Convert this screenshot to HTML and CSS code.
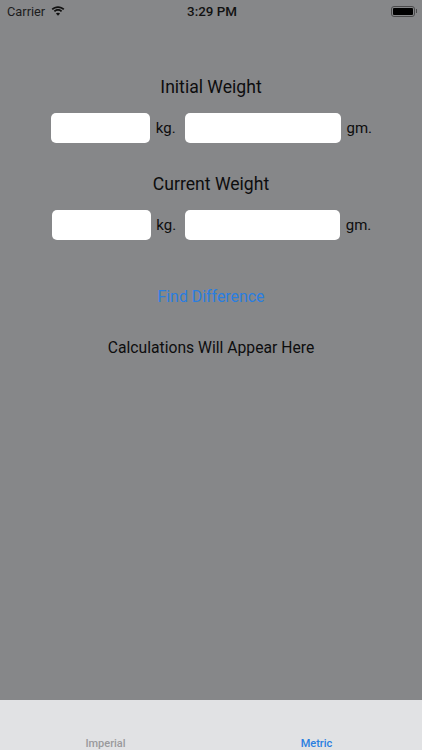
FILE: index.html
```html
<!DOCTYPE html>
<html lang="en">
<head>
	<meta charset="UTF-8">
	<title>Weight Difference</title>
	<link rel="stylesheet" href="styles.css">
</head>
<body>
	<div class="screen">
		<div class="status-bar">
			<div class="status-left">
				<span>Carrier</span>
				<svg class="wifi" width="14" height="10" viewBox="0 0 15 11">
					<path d="M7.5 2.2c2.2 0 4.200.8 5.700 2.200l1.300-1.400C12.600 1.200 10.200.2 7.500.2S2.400 1.200.500 3l1.300 1.400c1.500-1.400 3.500-2.200 5.700-2.200z"/>
					<path d="M7.500 5.300c1.300 0 2.400.5 3.300 1.300l1.300-1.400C10.900 4 9.300 3.300 7.500 3.300S4.100 4 2.900 5.200l1.300 1.400c.9-.8 2-1.300 3.300-1.300z"/>
					<path d="M7.500 10.800l2.300-2.500c-.6-.6-1.400-.9-2.300-.9s-1.700.3-2.300.9z"/>
				</svg>
			</div>
			<div class="status-time">3:29 PM</div>
			<div class="battery">
				<div class="battery-body"><div class="battery-fill"></div></div>
				<div class="battery-cap"></div>
			</div>
		</div>

		<div class="content">
			<div class="title first">Initial Weight</div>
			<div class="wrap-row row-one">
				<input type="text" class="field field-kg">
				<label class="unit unit-kg">kg.</label>
				<input type="text" class="field field-gm">
				<label class="unit">gm.</label>
			</div>
			<div class="title second">Current Weight</div>
			<div class="wrap-row row-two">
				<input type="text" class="field field-kg">
				<label class="unit unit-kg">kg.</label>
				<input type="text" class="field field-gm">
				<label class="unit">gm.</label>
			</div>
			<div class="find-btn">Find Difference</div>
			<div class="result">Calculations Will Appear Here</div>
		</div>

		<div class="tab-bar">
			<div class="tab">Imperial</div>
			<div class="tab tab-active">Metric</div>
		</div>
	</div>
</body>
</html>
```

FILE: styles.css
```css
html,body,div,span,label,input{
	padding: 0;
	margin: 0;
	border: 0;
}
body{
	font-family: "Roboto", "Liberation Sans", sans-serif;
	color: #0d0d0e;
}
.screen{
	display: flex;
	flex-direction: column;
	width: 422px;
	height: 750px;
	overflow: hidden;
	background-color: #868789;
}
.status-bar{
	display: flex;
	align-items: center;
	justify-content: space-between;
	height: 22px;
	padding: 0 7px;
	font-size: 12.800px;
	color: #111;
}
.status-left{
	display: flex;
	flex: 1;
	align-items: center;
	gap: 6px;
	color: #1c1c1d;
}
.wifi{
	fill: #111;
}
.status-time{
	font-weight: 500;
	font-size: 13.400px;
}
.battery{
	display: flex;
	flex: 1;
	align-items: center;
	justify-content: flex-end;
	margin-right: -2px;
}
.battery-body{
	width: 24px;
	height: 11px;
	padding: 1px;
	border: 1px solid #4a4a4b;
	border-radius: 3px;
	box-sizing: border-box;
}
.battery-fill{
	height: 100%;
	border-radius: 1px;
	background-color: #000;
}
.battery-cap{
	width: 1px;
	height: 4px;
	margin-left: 1px;
	background-color: #4a4a4b;
}
.content{
	flex: 1;
}
.title{
	font-size: 17.600px;
	line-height: 22px;
	text-align: center;
}
.title.first{
	margin-top: 54px;
}
.title.second{
	margin-top: 30px;
}
.wrap-row{
	display: flex;
	align-items: center;
	margin-top: 15px;
}
.row-one{
	padding-left: 51px;
}
.row-two{
	padding-left: 51.500px;
}
.field{
	display: block;
	height: 30px;
	border-radius: 5px;
	background-color: #fff;
}
.field-kg{
	width: 99.300px;
}
.row-one .field-gm{
	width: 155.700px;
}
.row-two .field-gm{
	width: 155.300px;
}
.unit{
	margin-left: 5.500px;
	font-size: 15px;
}
.unit-kg{
	width: 29.500px;
}
.row-two .unit-kg{
	width: 28.700px;
}
.find-btn{
	margin-top: 46px;
	font-size: 15.900px;
	line-height: 22px;
	text-align: center;
	color: #2a7ee0;
}
.result{
	margin-top: 29px;
	font-size: 15.700px;
	line-height: 22px;
	text-align: center;
}
.tab-bar{
	display: flex;
	height: 50px;
	background-color: #e1e2e4;
}
.tab{
	flex: 1;
	padding-top: 37px;
	font-size: 11px;
	font-weight: 500;
	text-align: center;
	color: #9a9a9c;
}
.tab-active{
	color: #2a7ee0;
}
```
